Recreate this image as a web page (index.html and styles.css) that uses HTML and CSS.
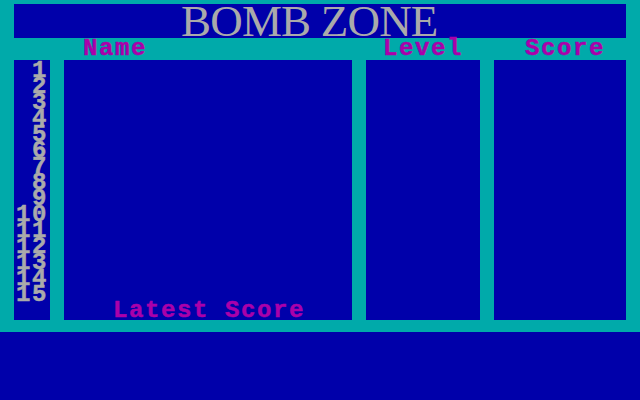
FILE: index.html
```html
<!DOCTYPE html>
<html>
<head>
<meta charset="utf-8">
<link rel="stylesheet" href="styles.css">
</head>
<body>
<div class="screen">
  <div class="title-bar"><h1 class="title">BOMB ZONE</h1></div>
  <div class="header">
    <div></div>
    <div class="label label-name">Name</div>
    <div class="label label-level">Level</div>
    <div class="label label-score">Score</div>
  </div>
  <div class="board">
    <div class="panel ranks">
      <span>1</span><span>2</span><span>3</span><span>4</span><span>5</span>
      <span>6</span><span>7</span><span>8</span><span>9</span><span>10</span>
      <span>11</span><span>12</span><span>13</span><span>14</span><span>15</span>
    </div>
    <div class="panel names"><div class="latest">Latest Score</div></div>
    <div class="panel levels"></div>
    <div class="panel scores"></div>
  </div>
</div>
<div class="footer"></div>
</body>
</html>
```
FILE: styles.css
```css
html, body {
  margin: 0;
  padding: 0;
}
body {
  width: 640px;
  height: 400px;
  background: #0000aa;
  overflow: hidden;
}
.screen {
  background: #00aaaa;
  padding: 4px 14px 12px;
}
.title-bar {
  background: #0000aa;
  height: 34px;
}
.title {
  margin: 0;
  padding-left: 167px;
  font-family: "Liberation Serif", serif;
  font-weight: normal;
  font-size: 45px;
  letter-spacing: -0.8px;
  line-height: 34px;
  color: #aaaaaa;
}
.header, .board {
  display: grid;
  grid-template-columns: 36px 288px 114px 132px;
  column-gap: 14px;
}
.header {
  height: 22px;
}
.label, .ranks, .latest {
  font-family: "Liberation Mono", monospace;
  font-weight: bold;
  font-size: 24px;
  letter-spacing: 1.6px;
  -webkit-text-stroke: 0.5px currentColor;
}
.label {
  line-height: 22px;
  color: #aa00aa;
}
.label-name { padding-left: 19px; }
.label-level { padding-left: 17px; }
.label-score { padding-left: 31px; }
.board {
  height: 260px;
}
.panel {
  background: #0000aa;
}
.ranks {
  display: flex;
  flex-direction: column;
  align-items: flex-end;
  padding: 3px 2px 0 0;
  line-height: 16px;
  color: #aaaaaa;
}
.names {
  display: flex;
  flex-direction: column;
  justify-content: flex-end;
}
.latest {
  text-align: center;
  padding: 0 0 1px 2px;
  line-height: 16px;
  color: #aa00aa;
}
.footer {
  height: 68px;
}
```
